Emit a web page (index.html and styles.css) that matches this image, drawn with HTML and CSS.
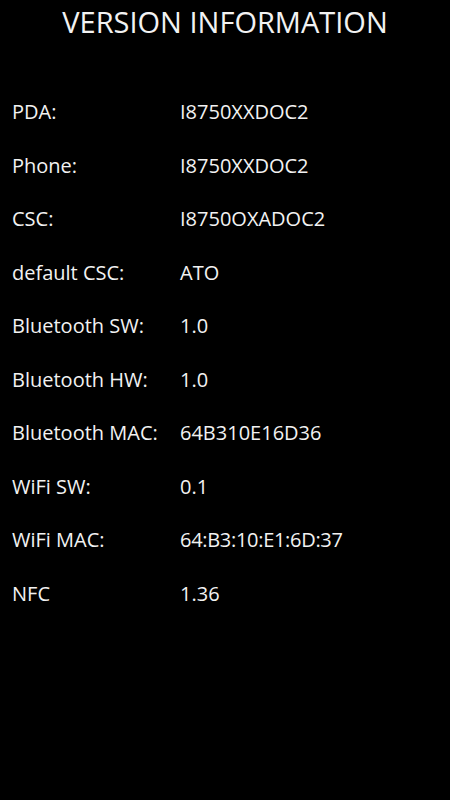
FILE: index.html
```
<!DOCTYPE html>
<html>
<head>
<meta charset="utf-8">
<link rel="stylesheet" href="styles.css">
</head>
<body>
<div class="screen">
  <h1 class="title">VERSION INFORMATION</h1>
  <div class="info">
    <div class="label">PDA:</div><div class="value">I8750XXDOC2</div>
    <div class="label">Phone:</div><div class="value">I8750XXDOC2</div>
    <div class="label">CSC:</div><div class="value">I8750OXADOC2</div>
    <div class="label">default CSC:</div><div class="value">ATO</div>
    <div class="label">Bluetooth SW:</div><div class="value">1.0</div>
    <div class="label">Bluetooth HW:</div><div class="value">1.0</div>
    <div class="label">Bluetooth MAC:</div><div class="value">64B310E16D36</div>
    <div class="label">WiFi SW:</div><div class="value">0.1</div>
    <div class="label">WiFi MAC:</div><div class="value mac">64:B3:10:E1:6D:37</div>
    <div class="label">NFC</div><div class="value">1.36</div>
  </div>
</div>
</body>
</html>
```
FILE: styles.css
```
html, body {
  margin: 0;
  padding: 0;
  background: #000;
}
.screen {
  width: 450px;
  height: 800px;
  background: #000;
  color: #f2f2f2;
  font-family: "Open Sans", "Noto Sans", sans-serif;
  overflow: hidden;
}
.title {
  margin: 0;
  height: 44px;
  line-height: 44px;
  font-size: 29px;
  font-weight: 400;
  text-align: center;
}
.info {
  display: grid;
  grid-template-columns: 168px 1fr;
  grid-auto-rows: 53.5px;
  padding: 41px 0 0 12px;
  font-size: 20px;
  align-items: center;
}
.label {
  font-size: 20px;
}
.value {
  font-size: 20px;
}
.value.mac {
  letter-spacing: -0.3px;
}
```
